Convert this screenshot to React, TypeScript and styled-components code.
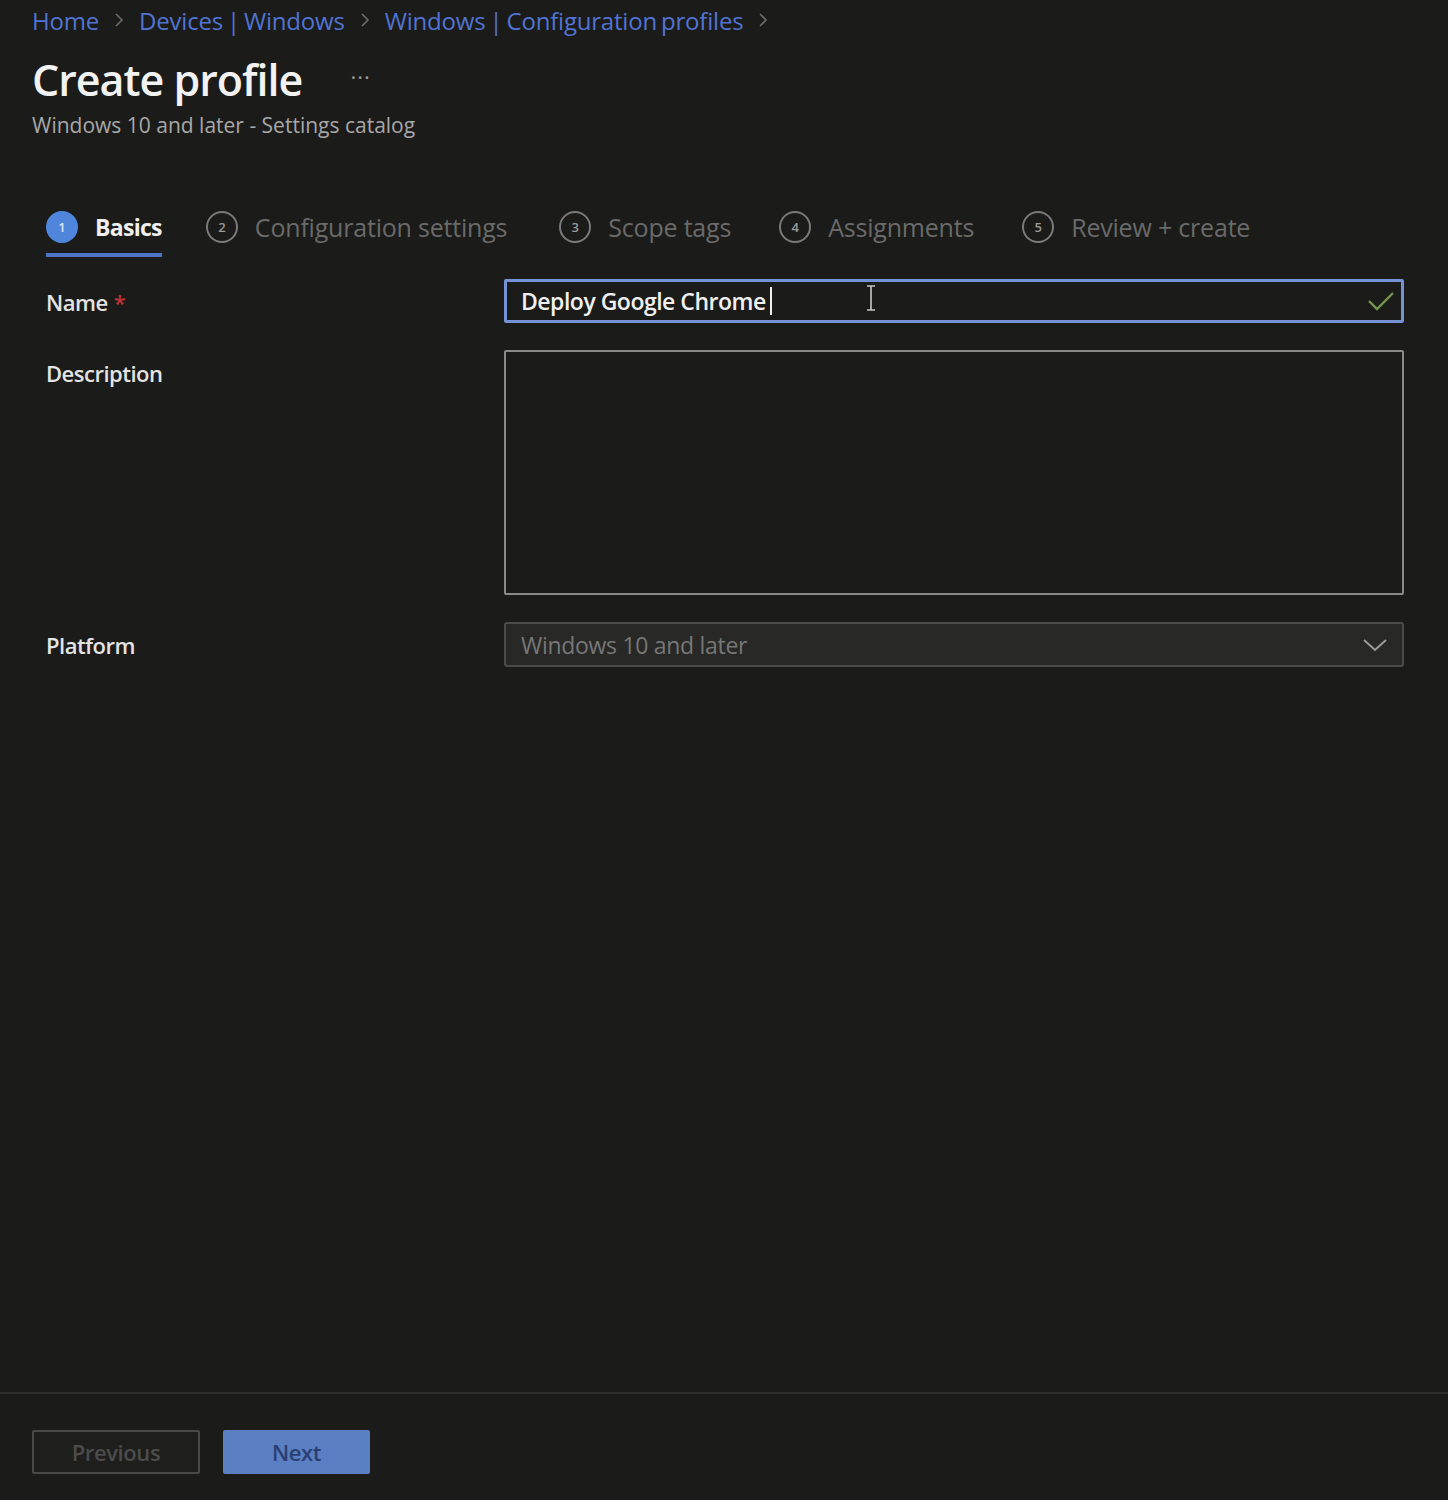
import React from "react";
import styled, { createGlobalStyle } from "styled-components";

const Global = createGlobalStyle`
  html, body { margin: 0; padding: 0; background: #1b1b19; }
  body { font-family: "Open Sans", "Noto Sans", sans-serif; color: #e6e6e6; }
  * { box-sizing: border-box; }
`;

const Page = styled.div`
  min-height: 1500px;
  display: flex;
  flex-direction: column;
  background: #1b1b19;
`;

const Main = styled.div`
  flex: 1;
  padding: 3px 0 0 32px;
`;

const Breadcrumb = styled.nav`
  display: flex;
  align-items: center;
  gap: 14px;
  height: 34px;
  font-size: 24px;
  letter-spacing: -0.2px;
  color: #5478d6;
`;

const Crumb = styled.span`
  color: #5174d4;
  word-spacing: -2px;
`;

const Sep = styled.span`
  display: flex;
  align-items: center;
`;

const TitleRow = styled.div`
  display: flex;
  align-items: center;
  gap: 48px;
  margin-top: 18px;
`;

const Title = styled.h1`
  margin: 0;
  font-size: 43px;
  font-weight: 600;
  letter-spacing: -1px;
  color: #f2f2f2;
  line-height: 50px;
`;

const More = styled.span`
  font-size: 22px;
  color: #9a9a9a;
  letter-spacing: 1px;
  margin-top: -8px;
`;

const Subtitle = styled.div`
  margin-top: 6px;
  font-size: 21px;
  letter-spacing: 0px;
  color: #a8a8a8;
`;

const Tabs = styled.div`
  display: flex;
  align-items: flex-start;
  gap: 44px;
  margin-top: 68px;
  margin-left: 14px;
`;

const Tab = styled.div<{ $active?: boolean; $gap?: number }>`
  display: flex;
  align-items: center;
  gap: 17px;
  height: 50px;
  padding-bottom: 6px;
  border-bottom: 4px solid ${(p) => (p.$active ? "#4d74c6" : "transparent")};
  font-size: ${(p) => (p.$active ? 23 : 25)}px;
  letter-spacing: ${(p) => (p.$active ? -0.7 : -0.2)}px;
  font-weight: ${(p) => (p.$active ? 700 : 400)};
  color: ${(p) => (p.$active ? "#f0f0f0" : "#6a6a6a")};
  margin-right: ${(p) => p.$gap ?? 0}px;
`;

const StepCircle = styled.span<{ $active?: boolean }>`
  width: 32px;
  height: 32px;
  border-radius: 50%;
  display: flex;
  align-items: center;
  justify-content: center;
  font-size: 13px;
  font-weight: 600;
  letter-spacing: 0;
  background: ${(p) => (p.$active ? "#4f86dc" : "transparent")};
  border: 2px solid ${(p) => (p.$active ? "#4f86dc" : "#7a7a7a")};
  color: ${(p) => (p.$active ? "#d9e6ff" : "#9a9a9a")};
  flex: none;
`;

const Form = styled.div`
  display: flex;
  flex-direction: column;
  margin-top: 22px;
  margin-left: 14px;
  margin-right: 44px;
`;

const Row = styled.div<{ $mt?: number }>`
  display: grid;
  grid-template-columns: 458px 1fr;
  align-items: start;
  margin-top: ${(p) => p.$mt ?? 0}px;
`;

const Label = styled.div`
  font-size: 22px;
  font-weight: 600;
  letter-spacing: -0.5px;
  color: #e4e4e4;
  padding-top: 8px;
`;

const Req = styled.span`
  color: #c0323a;
  margin-left: 6px;
`;

const NameInput = styled.div`
  height: 44px;
  border: 3px solid #7593d4;
  border-radius: 2px;
  display: flex;
  align-items: center;
  padding: 0 6px 0 14px;
  font-size: 23px;
  font-weight: 600;
  letter-spacing: -0.5px;
  color: #f0f0f0;
  position: relative;
`;

const Caret = styled.span`
  display: inline-block;
  width: 2px;
  height: 28px;
  background: #f0f0f0;
  margin-left: 4px;
`;

const IBeam = styled.span`
  position: absolute;
  left: 358px;
  top: 2px;
  display: flex;
`;

const Check = styled.span`
  margin-left: auto;
  display: flex;
  align-items: center;
`;

const TextArea = styled.div`
  height: 245px;
  border: 2px solid #8a8a8a;
  border-radius: 2px;
`;

const Select = styled.div`
  height: 45px;
  border: 2px solid #4b4b4a;
  border-radius: 3px;
  background: #282826;
  display: flex;
  align-items: center;
  padding: 0 14px 0 15px;
  font-size: 23px;
  letter-spacing: -0.3px;
  color: #777;
`;

const Chevron = styled.span`
  margin-left: auto;
  display: flex;
  align-items: center;
`;

const Footer = styled.footer`
  height: 108px;
  border-top: 2px solid #2e2e2d;
  display: flex;
  align-items: flex-start;
  gap: 23px;
  padding: 36px 0 0 32px;
`;

const Button = styled.button<{ $primary?: boolean }>`
  height: 44px;
  width: ${(p) => (p.$primary ? 147 : 168)}px;
  border-radius: 2px;
  font-family: inherit;
  font-size: 22px;
  font-weight: 600;
  letter-spacing: -0.4px;
  background: ${(p) => (p.$primary ? "#5a7fc2" : "#1e1e1d")};
  border: 2px solid ${(p) => (p.$primary ? "#5a7fc2" : "#4a4a49")};
  color: ${(p) => (p.$primary ? "#2b3f72" : "#4c4c4b")};
`;

const ChevronRight = () => (
  <svg width="12" height="18" viewBox="0 0 12 18">
    <path d="M3 3 L9 9 L3 15" fill="none" stroke="#6d6d6d" strokeWidth="1.6" />
  </svg>
);

const steps = [
  { n: 1, label: "Basics", gap: 0 },
  { n: 2, label: "Configuration settings", gap: 8 },
  { n: 3, label: "Scope tags", gap: 4 },
  { n: 4, label: "Assignments", gap: 4 },
  { n: 5, label: "Review + create", gap: 0 },
];

export default function App() {
  return (
    <Page>
      <Global />
      <Main>
        <Breadcrumb>
          <Crumb>Home</Crumb>
          <Sep><ChevronRight /></Sep>
          <Crumb>Devices | Windows</Crumb>
          <Sep><ChevronRight /></Sep>
          <Crumb>Windows | Configuration profiles</Crumb>
          <Sep><ChevronRight /></Sep>
        </Breadcrumb>
        <TitleRow>
          <Title>Create profile</Title>
          <More>···</More>
        </TitleRow>
        <Subtitle>Windows 10 and later - Settings catalog</Subtitle>
        <Tabs>
          {steps.map((s) => (
            <Tab key={s.n} $active={s.n === 1} $gap={s.gap}>
              <StepCircle $active={s.n === 1}>{s.n}</StepCircle>
              {s.label}
            </Tab>
          ))}
        </Tabs>
        <Form>
          <Row>
            <Label>
              Name<Req>*</Req>
            </Label>
            <NameInput>
              Deploy Google Chrome
              <Caret />
              <IBeam>
                <svg width="12" height="28" viewBox="0 0 12 28">
                  <path d="M2 2 H10 M6 2 V26 M2 26 H10" fill="none" stroke="#c8c8c8" strokeWidth="1.6" />
                </svg>
              </IBeam>
              <Check>
                <svg width="28" height="22" viewBox="0 0 28 22">
                  <path d="M2 11 L10 19 L26 3" fill="none" stroke="#74964f" strokeWidth="2.4" />
                </svg>
              </Check>
            </NameInput>
          </Row>
          <Row $mt={27}>
            <Label>Description</Label>
            <TextArea />
          </Row>
          <Row $mt={27}>
            <Label>Platform</Label>
            <Select>
              Windows 10 and later
              <Chevron>
                <svg width="26" height="16" viewBox="0 0 26 16">
                  <path d="M2 3 L13 13 L24 3" fill="none" stroke="#9a9a9a" strokeWidth="2" />
                </svg>
              </Chevron>
            </Select>
          </Row>
        </Form>
      </Main>
      <Footer>
        <Button>Previous</Button>
        <Button $primary>Next</Button>
      </Footer>
    </Page>
  );
}
